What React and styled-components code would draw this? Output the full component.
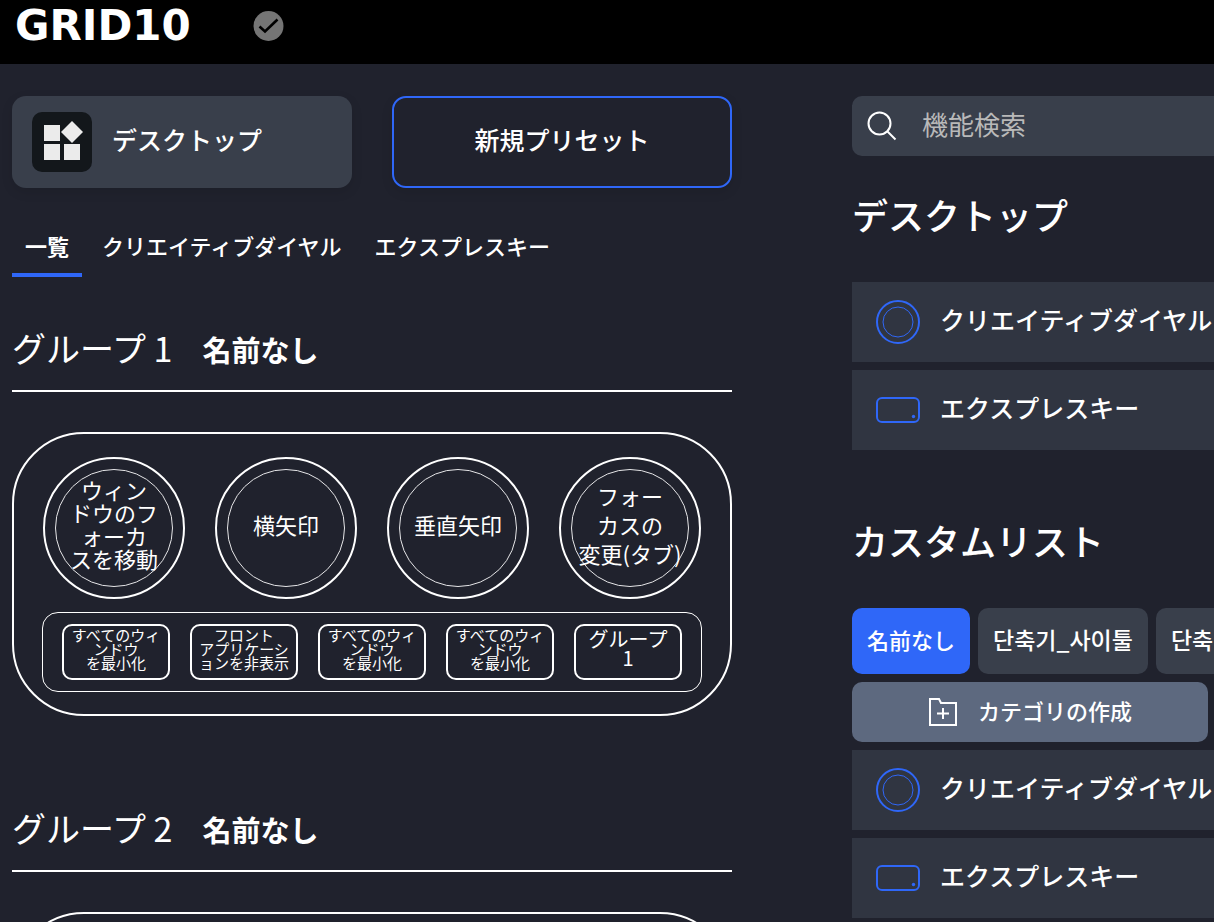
import React, { useState } from "react";
import styled, { createGlobalStyle, css } from "styled-components";

const color = {
  page: "#20222d",
  surface: "#393f4b",
  row: "#303541",
  slate: "#5d697f",
  accent: "#2f67f8",
  tile: "#13171b",
  text: "#ffffff",
  hint: "#b9b9b9",
};

const GlobalStyle = createGlobalStyle`
  *, *::before, *::after { box-sizing: border-box; }
  html { scrollbar-width: none; }
  body {
    margin: 0;
    background: ${color.page};
    color: ${color.text};
    font-family: "Noto Sans CJK JP", "Noto Sans CJK KR", sans-serif;
  }
  button, input { font: inherit; color: inherit; }
  button { border: 0; background: none; padding: 0; cursor: pointer; }
  h1, h2, h3 { margin: 0; }
`;

const Shell = styled.div`
  display: flex;
  flex-direction: column;
  min-height: 100vh;
`;

const Header = styled.header`
  display: flex;
  flex: none;
  align-items: flex-start;
  gap: 30px;
  height: 64px;
  padding: 0 15px;
  background: #000;
`;

const Wordmark = styled.h1`
  min-width: 208px;
  font-family: "DejaVu Sans", sans-serif;
  font-size: 42px;
  font-weight: 700;
  line-height: 52px;
`;

const StatusIcon = styled.svg`
  width: 32px;
  height: 52px;
  margin-left: -1px;
`;

const Main = styled.main`
  display: flex;
  flex: 1;
  gap: 120px;
  padding-left: 12px;
`;

const column = css`
  min-width: 0;
  padding: 32px 0;
`;

const Editor = styled.section`
  ${column}
  flex: 0 1 720px;
`;

const Sidebar = styled.aside`
  ${column}
  flex: 1 1 362px;
  overflow-x: clip;
`;

const PresetBar = styled.div`
  display: grid;
  grid-template-columns: 1fr 1fr;
  gap: 40px;
`;

const PresetButton = styled.button`
  display: flex;
  align-items: center;
  justify-content: ${(p) => (p.$outlined ? "center" : "flex-start")};
  gap: 20px;
  height: 92px;
  padding: 0 20px;
  border: ${(p) => (p.$outlined ? `2px solid ${color.accent}` : "0")};
  border-radius: 14px;
  background: ${(p) => (p.$outlined ? "transparent" : color.surface)};
  box-shadow: 0 4px 12px rgba(0, 0, 0, 0.1);
`;

const Label = styled.span`
  font-size: 25px;
  font-weight: 500;
  line-height: 36px;
  padding-bottom: 6px;
  white-space: nowrap;
`;

const Tile = styled.span`
  display: block;
  width: 60px;
  height: 60px;
  border-radius: 10px;
  background: ${color.tile};
`;

const TabList = styled.div`
  display: flex;
  gap: 7px;
  margin-top: 29px;
`;

const Tab = styled.button`
  height: 60px;
  padding: 0 13px;
  border-bottom: 4px solid ${(p) => (p.$active ? color.accent : "transparent")};
  font-size: 22px;
  font-weight: ${(p) => (p.$active ? 700 : 500)};
  line-height: 32px;
  white-space: nowrap;
`;

const Group = styled.section`
  margin-top: ${(p) => (p.$first ? 39 : 80)}px;
`;

const GroupHeader = styled.div`
  display: flex;
  align-items: baseline;
  gap: 30px;
  height: 76px;
  padding-top: 8px;
  border-bottom: 2px solid #fff;
`;

const GroupTitle = styled.h2`
  font-size: 34px;
  font-weight: 400;
  line-height: 48px;
`;

const GroupName = styled.h3`
  font-size: 29px;
  font-weight: 700;
  line-height: 48px;
`;

const Device = styled.div`
  display: flex;
  flex-direction: column;
  gap: 13px;
  margin-top: 40px;
  padding: 23px 28px 22px;
  border: 2px solid #fff;
  border-radius: 72px;
`;

const DialRow = styled.div`
  display: flex;
  justify-content: space-between;
  padding: 0 1px;
`;

const Dial = styled.button`
  display: grid;
  place-items: center;
  width: 142px;
  height: 142px;
  padding: 10px;
  border: 2px solid #fff;
  border-radius: 50%;
`;

const DialFace = styled.span`
  display: grid;
  place-content: center;
  width: 118px;
  height: 118px;
  padding-bottom: 8px;
  border: 1px solid #e6e6e8;
  border-radius: 50%;
  font-size: 22px;
  line-height: ${(p) => (p.$dense ? 23 : 29)}px;
  text-align: center;
  white-space: pre;
`;

const KeyTray = styled.div`
  display: grid;
  grid-template-columns: repeat(5, 1fr);
  gap: 20px;
  padding: 11px 19px;
  border: 1px solid #fff;
  border-radius: 16px;
`;

const Key = styled.button`
  display: flex;
  justify-content: center;
  height: 56px;
  padding-top: ${(p) => (p.$large ? 3 : 2)}px;
  border: 2px solid #fff;
  border-radius: 10px;
  font-size: ${(p) => (p.$large ? 20 : 15)}px;
  line-height: ${(p) => (p.$large ? 19 : 14)}px;
  text-align: center;
  white-space: pre;
`;

const SearchBox = styled.label`
  display: flex;
  align-items: center;
  gap: 24px;
  height: 60px;
  padding-left: 14px;
  border-radius: 10px 0 0 10px;
  background: ${color.surface};
`;

const SearchInput = styled.input`
  flex: 1;
  min-width: 0;
  height: 60px;
  padding: 0 0 6px;
  border: 0;
  outline: 0;
  background: none;
  font-size: 26px;
  &::placeholder { color: ${color.hint}; opacity: 1; }
`;

const SectionTitle = styled.h2`
  margin-top: ${(p) => (p.$first ? 34 : 66)}px;
  padding-bottom: 4px;
  font-size: 36px;
  font-weight: 500;
  line-height: 48px;
`;

const List = styled.div`
  display: flex;
  flex-direction: column;
  gap: 8px;
  margin-top: ${(p) => p.$top}px;
`;

const ListRow = styled.button`
  display: flex;
  flex: none;
  align-items: center;
  gap: 20px;
  height: 80px;
  padding-left: 24px;
  background: ${color.row};
`;

const RowIcon = styled.svg`
  flex: none;
  width: 44px;
  height: 44px;
`;

const ChipRow = styled.div`
  display: flex;
  gap: 8px;
  margin-top: 40px;
`;

const Chip = styled.button`
  flex: none;
  height: 66px;
  padding: 0 15px 4px;
  border-radius: 10px;
  background: ${(p) => (p.$active ? color.accent : color.surface)};
  font-size: 22px;
  font-weight: 500;
  &:lang(ko) {
    font-family: "Noto Sans CJK KR", sans-serif;
    font-size: 23px;
  }
`;

const CreateButton = styled.button`
  display: flex;
  align-items: center;
  justify-content: center;
  gap: 20px;
  width: calc(100% - 6px);
  height: 60px;
  margin-top: 8px;
  border-radius: 10px;
  background: ${color.slate};
  font-size: 22px;
  font-weight: 500;
`;

const CreateLabel = styled.span`
  padding-bottom: 4px;
  line-height: 32px;
`;

const dials = [
  { text: "ウィン\nドウのフ\nォーカ\nスを移動", dense: true },
  { text: "横矢印" },
  { text: "垂直矢印" },
  { text: "フォー\nカスの\n変更(タブ)" },
];

const minimizeAll = "すべてのウィ\nンドウ\nを最小化";
const keys = [
  { text: minimizeAll },
  { text: "フロント\nアプリケーシ\nョンを非表示" },
  { text: minimizeAll },
  { text: minimizeAll },
  { text: "グループ\n1", large: true },
];

const tabs = ["一覧", "クリエイティブダイヤル", "エクスプレスキー"];
const chips = [
  { text: "名前なし", lang: "ja" },
  { text: "단축기_사이툴", lang: "ko" },
  { text: "단축기_사이툴", lang: "ko" },
];

function DialIcon() {
  return (
    <RowIcon viewBox="0 0 44 44" fill="none" stroke={color.accent} aria-hidden="true">
      <circle cx="22" cy="22" r="21" strokeWidth="2" />
      <circle cx="22" cy="22" r="15" strokeWidth="1" />
    </RowIcon>
  );
}

function KeyIcon() {
  return (
    <RowIcon viewBox="0 0 44 44" fill="none" aria-hidden="true">
      <rect x="1" y="10" width="42" height="24" rx="5" stroke={color.accent} strokeWidth="2" />
      <circle cx="37.5" cy="28.5" r="1.7" fill={color.accent} />
    </RowIcon>
  );
}

function ControlList({ top }) {
  return (
    <List $top={top}>
      <ListRow type="button">
        <DialIcon />
        <Label>クリエイティブダイヤル</Label>
      </ListRow>
      <ListRow type="button">
        <KeyIcon />
        <Label>エクスプレスキー</Label>
      </ListRow>
    </List>
  );
}

function DeviceGroup({ number, first }) {
  return (
    <Group $first={first}>
      <GroupHeader>
        <GroupTitle>グループ {number}</GroupTitle>
        <GroupName>名前なし</GroupName>
      </GroupHeader>
      <Device>
        <DialRow>
          {dials.map((d) => (
            <Dial key={d.text} type="button">
              <DialFace $dense={d.dense}>{d.text}</DialFace>
            </Dial>
          ))}
        </DialRow>
        <KeyTray>
          {keys.map((k, i) => (
            <Key key={i} type="button" $large={k.large}>{k.text}</Key>
          ))}
        </KeyTray>
      </Device>
    </Group>
  );
}

export default function App() {
  const [tab, setTab] = useState(0);
  const [chip, setChip] = useState(0);
  return (
    <Shell>
      <GlobalStyle />
      <Header>
        <Wordmark>GRID10</Wordmark>
        <StatusIcon viewBox="0 0 32 52" aria-hidden="true">
          <circle cx="16.5" cy="26" r="15" fill="#757575" />
          <path d="M7.5 26.5 L13 31.5 L25.5 19.5" fill="none" stroke="#000" strokeWidth="2.6" />
        </StatusIcon>
      </Header>
      <Main>
        <Editor>
          <PresetBar>
            <PresetButton type="button">
              <Tile>
                <svg width="60" height="60" viewBox="0 0 60 60" fill="#ebebeb" aria-hidden="true">
                  <rect x="12" y="13" width="16" height="16" />
                  <rect x="12" y="32" width="16" height="16" />
                  <rect x="32" y="32" width="16" height="16" />
                  <path d="M40 9 L51 20 L40 31 L29 20 Z" />
                </svg>
              </Tile>
              <Label>デスクトップ</Label>
            </PresetButton>
            <PresetButton type="button" $outlined>
              <Label>新規プリセット</Label>
            </PresetButton>
          </PresetBar>
          <TabList role="tablist">
            {tabs.map((t, i) => (
              <Tab key={t} type="button" role="tab" aria-selected={tab === i} $active={tab === i} onClick={() => setTab(i)}>
                {t}
              </Tab>
            ))}
          </TabList>
          <DeviceGroup number={1} first />
          <DeviceGroup number={2} />
        </Editor>
        <Sidebar>
          <SearchBox>
            <svg width="32" height="32" viewBox="0 0 32 32" fill="none" stroke="#fff" strokeWidth="2" aria-hidden="true">
              <circle cx="13.5" cy="13.5" r="11" />
              <path d="M21 21 L29.5 29.5" />
            </svg>
            <SearchInput type="text" placeholder="機能検索" aria-label="機能検索" />
          </SearchBox>
          <SectionTitle $first>デスクトップ</SectionTitle>
          <ControlList top={40} />
          <SectionTitle>カスタムリスト</SectionTitle>
          <ChipRow>
            {chips.map((c, i) => (
              <Chip key={i} type="button" lang={c.lang} $active={chip === i} onClick={() => setChip(i)}>
                {c.text}
              </Chip>
            ))}
          </ChipRow>
          <CreateButton type="button">
            <svg width="30" height="30" viewBox="0 0 30 30" fill="none" stroke="#fff" strokeWidth="2" aria-hidden="true">
              <path d="M2 2 H11 L13 6 H28 V28 H2 Z" />
              <path d="M15 11 V22 M9 16.5 H21" />
            </svg>
            <CreateLabel>カテゴリの作成</CreateLabel>
          </CreateButton>
          <ControlList top={8} />
        </Sidebar>
      </Main>
    </Shell>
  );
}
